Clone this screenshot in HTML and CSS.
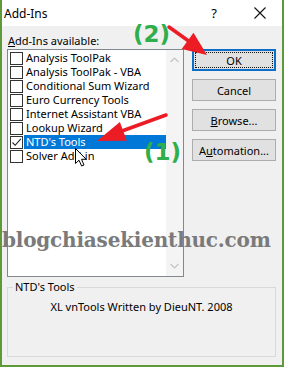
FILE: index.html
```html
<!DOCTYPE html>
<html>
<head>
<meta charset="utf-8">
<link rel="stylesheet" href="styles.css">
</head>
<body>
<div class="window">
  <div class="titlebar">
    <span class="title">Add-Ins</span>
    <span class="tb-btn help">?</span>
    <span class="tb-btn close">
      <svg width="12" height="12" viewBox="0 0 12 12"><path d="M0.5 0.5 L11.5 11.5 M11.5 0.5 L0.5 11.5" stroke="#111" stroke-width="1.1" fill="none"/></svg>
    </span>
  </div>
  <div class="body">
    <div class="main">
      <div class="left">
        <div class="label"><u>A</u>dd-Ins available:</div>
        <div class="listbox">
          <div class="items">
            <div class="item"><span class="cb"></span><span class="txt">Analysis ToolPak</span></div>
            <div class="item"><span class="cb"></span><span class="txt">Analysis ToolPak - VBA</span></div>
            <div class="item"><span class="cb"></span><span class="txt">Conditional Sum Wizard</span></div>
            <div class="item"><span class="cb"></span><span class="txt">Euro Currency Tools</span></div>
            <div class="item"><span class="cb"></span><span class="txt">Internet Assistant VBA</span></div>
            <div class="item"><span class="cb"></span><span class="txt">Lookup Wizard</span></div>
            <div class="item selected"><span class="cb"><svg width="11" height="11" viewBox="0 0 11 11"><path d="M1.5 5.5 L4.2 8.3 L9.8 1.8" stroke="#222" stroke-width="1.1" fill="none"/></svg></span><span class="txt">NTD's Tools</span></div>
            <div class="item"><span class="cb"></span><span class="txt">Solver Add-in</span></div>
          </div>
          <div class="scroll">
            <svg width="9" height="6" viewBox="0 0 9 6"><path d="M0.5 5 L4.5 1 L8.5 5" stroke="#c4c4c4" stroke-width="1.2" fill="none"/></svg>
            <svg width="9" height="6" viewBox="0 0 9 6"><path d="M0.5 1 L4.5 5 L8.5 1" stroke="#c4c4c4" stroke-width="1.2" fill="none"/></svg>
          </div>
        </div>
      </div>
      <div class="buttons">
        <button class="btn default"><span class="focus">OK</span></button>
        <button class="btn">Cancel</button>
        <button class="btn"><u>B</u>rowse...</button>
        <button class="btn">A<u>u</u>tomation...</button>
      </div>
    </div>
    <fieldset class="group">
      <legend>NTD's Tools</legend>
      <div class="desc">XL vnTools Written by DieuNT. 2008</div>
    </fieldset>
  </div>

  <div class="watermark">blogchiasekienthuc.com</div>
  <div class="note n1">(1)</div>
  <div class="note n2">(2)</div>
  <svg class="arrows" width="284" height="367" viewBox="0 0 284 367">
    <path d="M166 115 L122 131" stroke="#ec1c24" stroke-width="3.5" stroke-linecap="round"/>
    <polygon points="97,141 126.8,140.7 119.9,121.9" fill="#ec1c24"/>
    <path d="M169 27 L190 42" stroke="#ec1c24" stroke-width="3.5" stroke-linecap="round"/>
    <polygon points="207,55 193.5,32.8 181.7,49" fill="#ec1c24"/>
  </svg>
  <svg class="cursor" width="13" height="19" viewBox="0 0 13 19">
    <path d="M0.5 0.5 L0.5 15.5 L4 12.2 L6.6 18 L9 17 L6.5 11.3 L11.2 11.3 Z" fill="#fff" stroke="#000" stroke-width="1" stroke-linejoin="miter"/>
  </svg>
</div>
</body>
</html>
```

FILE: styles.css
```css
* { box-sizing: border-box; }
html, body { margin: 0; padding: 0; }
body {
  width: 284px;
  height: 367px;
  font-family: "Noto Sans", "Open Sans", sans-serif;
  font-size: 11px;
  color: #000;
  background: #fff;
}
.window {
  position: relative;
  width: 284px;
  height: 367px;
  border: 2px solid #5f9a3a;
  border-top: 0;
  display: flex;
  flex-direction: column;
  background: #f0f0f0;
  overflow: hidden;
}
.titlebar {
  height: 26px;
  background: #fff;
  display: flex;
  align-items: center;
  padding-left: 2px;
}
.title {
  font-size: 12px;
  flex: 1;
}
.tb-btn {
  width: 45px;
  height: 26px;
  display: flex;
  align-items: center;
  justify-content: center;
}
.help { font-size: 13px; padding-right: 1px; }
.body {
  flex: 1;
  display: flex;
  flex-direction: column;
  padding: 8px 6px 8px 5px;
}
.main {
  display: flex;
  gap: 8px;
}
.left {
  display: flex;
  flex-direction: column;
}
.label {
  height: 15px;
  line-height: 14px;
  padding-left: 1px;
}
.listbox {
  width: 177px;
  height: 228px;
  border: 1px solid #828790;
  background: #fff;
  display: flex;
}
.items {
  width: 158px;
  padding-top: 1px;
}
.item {
  height: 14px;
  display: flex;
  align-items: center;
  line-height: 14px;
  white-space: nowrap;
}
.cb {
  width: 13px;
  height: 13px;
  margin-left: 2px;
  margin-right: 1px;
  border: 1px solid #333;
  background: #fff;
  display: flex;
  align-items: center;
  justify-content: center;
  flex: none;
}
.txt {
  flex: 1;
  padding-left: 2px;
  height: 14px;
}
.selected .txt {
  background: #0078d7;
  color: #fff;
}
.scroll {
  flex: 1;
  background: #f4f4f4;
  display: flex;
  flex-direction: column;
  justify-content: space-between;
  align-items: center;
  padding: 7px 0 7px;
}
.buttons {
  margin-top: 15px;
  display: flex;
  flex-direction: column;
  gap: 8px;
}
.btn {
  width: 84px;
  height: 22px;
  border: 1px solid #adadad;
  background: #e1e1e1;
  font-family: inherit;
  font-size: 11px;
  color: #000;
  padding: 0;
  display: flex;
  align-items: center;
  justify-content: center;
}
.btn.default {
  border: 2px solid #0f6fc6;
  padding: 1px;
}
.focus {
  width: 100%;
  height: 100%;
  border: 1px dotted #111;
  display: flex;
  align-items: center;
  justify-content: center;
}
.group {
  margin: 3px 0 0;
  height: 77px;
  border: 1px solid #d9d9d9;
  padding: 0 4px;
}
.group legend {
  padding: 0 2px;
  margin-left: 1px;
  line-height: 14px;
}
.desc {
  text-align: center;
  margin-top: 6px;
  line-height: 14px;
}
.watermark {
  position: absolute;
  left: 0;
  top: 228px;
  font-family: "DejaVu Serif", serif;
  font-weight: bold;
  font-size: 20px;
  color: #7a7a7a;
  letter-spacing: -0.2px;
  white-space: nowrap;
}
.note {
  position: absolute;
  font-family: "DejaVu Sans", sans-serif;
  font-weight: bold;
  font-size: 23px;
  color: #2fae4b;
  line-height: 26px;
}
.n1 { left: 142px; top: 139px; }
.n2 { left: 131px; top: 21px; }
.arrows {
  position: absolute;
  left: -2px;
  top: 0;
}
.cursor {
  position: absolute;
  left: 73px;
  top: 148px;
}
```
